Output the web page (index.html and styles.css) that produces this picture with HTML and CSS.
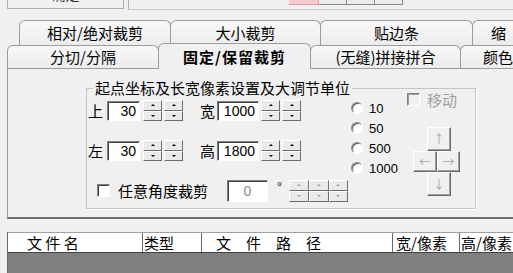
FILE: index.html
```html
<!DOCTYPE html>
<html lang="zh-CN">
<head>
    <meta charset="UTF-8">
    <title>固定/保留裁剪</title>
    <link rel="stylesheet" href="styles.css">
</head>
<body>
    <div class="topbar">
        <div class="top-btn"><span>确定</span></div>
        <div class="top-box">
            <div class="toolstrip">
                <span class="tool pink"></span>
                <span class="tool"></span>
                <span class="tool"></span>
                <span class="tool"></span>
            </div>
        </div>
    </div>

    <div class="tabs">
        <div class="tab-row back">
            <div class="tab w152">相对/绝对裁剪</div>
            <div class="tab w151">大小裁剪</div>
            <div class="tab w153">贴边条</div>
            <div class="tab last first-row">缩</div>
        </div>
        <div class="tab-row front">
            <div class="tab w152">分切/分隔</div>
            <div class="tab w153 active">固定/保留裁剪</div>
            <div class="tab w151">(无缝)拼接拼合</div>
            <div class="tab last">颜色</div>
        </div>
    </div>

    <div class="panel">
        <div class="group">
            <span class="group-title">起点坐标及长宽像素设置及大调节单位</span>

            <div class="fields">
                <div class="field-row">
                    <span class="lbl">上</span>
                    <span class="edit w33">30</span>
                    <span class="spin"><i class="up"></i><i class="down"></i></span>
                    <span class="spin"><i class="up"></i><i class="down"></i></span>
                    <span class="lbl second">宽</span>
                    <span class="edit w42">1000</span>
                    <span class="spin"><i class="up"></i><i class="down"></i></span>
                    <span class="spin"><i class="up"></i><i class="down"></i></span>
                </div>
                <div class="field-row row2">
                    <span class="lbl">左</span>
                    <span class="edit w33">30</span>
                    <span class="spin"><i class="up"></i><i class="down"></i></span>
                    <span class="spin"><i class="up"></i><i class="down"></i></span>
                    <span class="lbl second">高</span>
                    <span class="edit w42">1800</span>
                    <span class="spin"><i class="up"></i><i class="down"></i></span>
                    <span class="spin"><i class="up"></i><i class="down"></i></span>
                </div>
                <div class="angle-row">
                    <span class="check"></span>
                    <span class="angle-text">任意角度裁剪</span>
                    <span class="edit disabled">0</span>
                    <span class="degree">°</span>
                    <span class="spin3">
                        <i class="up"></i><i class="up"></i><i class="up"></i>
                        <i class="down"></i><i class="down"></i><i class="down"></i>
                    </span>
                </div>
            </div>

            <div class="radios">
                <div class="radio-row"><span class="radio"></span>10</div>
                <div class="radio-row"><span class="radio"></span>50</div>
                <div class="radio-row"><span class="radio"></span>500</div>
                <div class="radio-row"><span class="radio"></span>1000</div>
            </div>

            <div class="move">
                <div class="move-row"><span class="check off"></span><span class="move-text">移动</span></div>
                <div class="pad">
                    <span class="pad-btn p-up">↑</span>
                    <span class="pad-btn p-left">←</span>
                    <span class="pad-btn p-right">→</span>
                    <span class="pad-btn p-down">↓</span>
                </div>
            </div>
        </div>
    </div>

    <div class="list">
        <div class="list-head">
            <span class="col c-name">文 件 名</span>
            <span class="col c-type">类型</span>
            <span class="col c-path">文　件　路　径</span>
            <span class="col c-w">宽/像素</span>
            <span class="col c-h">高/像素</span>
        </div>
        <div class="list-body"></div>
    </div>
</body>
</html>
```

FILE: styles.css
```css
body {
    margin: 0;
    width: 513px;
    height: 273px;
    overflow: hidden;
    background: #f0f0f0;
    font-family: "Noto Sans CJK SC", sans-serif;
    font-size: 15px;
    color: #000;
}

/* strip of the window above the tabs, mostly cut off */
.topbar {
    display: flex;
    height: 10px;
}

.top-btn {
    margin-left: 7px;
    width: 115px;
    height: 8px;
    border: 1px solid #adadad;
    border-top: none;
    overflow: hidden;
    text-align: center;
}

.top-btn span {
    display: block;
    margin-top: -15px;
    line-height: 18px;
    font-size: 14px;
    color: #333;
}

.top-box {
    margin-left: 4px;
    flex: 1;
    height: 9px;
    border-left: 1px solid #adadad;
    border-bottom: 1px solid #c8c8c8;
}

.toolstrip {
    display: flex;
    margin-left: 160px;
    height: 5px;
}

.tool {
    width: 27px;
    border: 1px solid #8a8a8a;
    border-top: none;
    border-left: none;
    background: #ececec;
}

.tool.pink {
    width: 29px;
    background: #f4c9cf;
    border-color: #d7a0a8;
}

/* tabs */
.tabs {
    margin-top: 10px;
}

.tab-row {
    display: flex;
}

.tab-row.back {
    padding-left: 19px;
    height: 25px;
}

.tab-row.front {
    padding-left: 7px;
    height: 23px;
}

.tab {
    flex-shrink: 0;
    box-sizing: border-box;
    margin-right: -1px;
    border: 1px solid #9c9c9c;
    border-bottom: none;
    border-radius: 6px 6px 0 0;
    background: linear-gradient(#f8f8f8, #ececec);
    text-align: center;
    white-space: nowrap;
    overflow: hidden;
}

.tab.last {
    flex: 1;
    margin-right: 0;
    border-right: none;
    border-top-right-radius: 0;
    padding-left: 22px;
    text-align: left;
}

.tab.last.first-row {
    padding-left: 18px;
}

.back .tab {
    height: 25px;
    line-height: 23px;
}

.front .tab {
    height: 23px;
    line-height: 22px;
}

.front .tab.active {
    position: relative;
    z-index: 1;
    height: 26px;
    margin-top: -2px;
    line-height: 25px;
    background: #f0f0f0;
    font-weight: bold;
    letter-spacing: 1px;
}

.w151 { width: 151px; }
.w152 { width: 152px; }
.w153 { width: 153px; }

/* tab page */
.panel {
    box-sizing: border-box;
    height: 151px;
    margin-left: 7px;
    padding-top: 19px;
    border-top: 1px solid #9c9c9c;
    border-left: 1px solid #9c9c9c;
    border-bottom: 2px solid #707070;
}

.group {
    position: relative;
    box-sizing: border-box;
    display: flex;
    align-items: flex-start;
    width: 390px;
    height: 121px;
    margin-left: 78px;
    border: 1px solid #c4c4c4;
    box-shadow: 1px 1px 0 #fff;
}

.group-title {
    position: absolute;
    top: -11px;
    left: 6px;
    padding: 0 2px;
    background: #f0f0f0;
    line-height: 20px;
}

.fields {
    width: 261px;
    margin-left: 1px;
    padding-top: 11px;
}

.field-row {
    display: flex;
    align-items: center;
    height: 21px;
}

.field-row.row2 {
    margin-top: 19px;
}

.lbl {
    width: 19px;
    line-height: 21px;
}

.lbl.second {
    width: 17px;
    margin-left: 15px;
}

.edit {
    box-sizing: border-box;
    height: 20px;
    padding-right: 3px;
    border: 1px solid;
    border-color: #808080 #fff #fff #808080;
    box-shadow: inset 1px 1px 0 #404040;
    background: #fff;
    font-family: "Liberation Sans", sans-serif;
    font-size: 14px;
    line-height: 18px;
    text-align: right;
}

.w33 { width: 33px; margin-right: 3px; }
.w42 { width: 42px; margin-right: 2px; }

.spin {
    display: flex;
    flex-direction: column;
    box-sizing: border-box;
    width: 19px;
    height: 21px;
    margin-right: 2px;
}

.spin i, .spin3 i {
    position: relative;
    flex: 1;
    box-sizing: border-box;
    border: 1px solid;
    border-color: #fff #6b6b6b #6b6b6b #fff;
    background: #eaeaea;
}

.spin i::after, .spin3 i::after {
    content: "";
    position: absolute;
    left: 50%;
    top: 50%;
    margin: -1px 0 0 -2px;
    border: 2px solid transparent;
}

.spin i.up::after, .spin3 i.up::after {
    margin-top: -3px;
    border-bottom-color: #000;
}

.spin i.down::after, .spin3 i.down::after {
    margin-top: -1px;
    border-top-color: #000;
}

.angle-row {
    display: flex;
    align-items: center;
    height: 23px;
    margin-top: 18px;
}

.check {
    box-sizing: border-box;
    width: 13px;
    height: 13px;
    border: 1px solid;
    border-color: #808080 #fff #fff #808080;
    box-shadow: inset 1px 1px 0 #404040;
    background: #fff;
}

.angle-row .check {
    margin-left: 9px;
}

.angle-text {
    margin-left: 8px;
}

.edit.disabled {
    width: 41px;
    height: 22px;
    margin-left: 19px;
    padding: 0;
    line-height: 20px;
    text-align: center;
    color: #8c8c8c;
}

.degree {
    margin-left: 9px;
    margin-top: -8px;
    font-family: "Liberation Sans", sans-serif;
    font-size: 13px;
}

.spin3 {
    display: grid;
    grid-template-columns: repeat(3, 1fr);
    grid-template-rows: repeat(2, 1fr);
    width: 59px;
    height: 22px;
    margin-left: 7px;
}

.spin3 i.up::after {
    border-bottom-color: #a0a0a0;
}

.spin3 i.down::after {
    border-top-color: #a0a0a0;
}

/* step size radios */
.radios {
    width: 56px;
    margin-left: 2px;
    padding-top: 9px;
    font-family: "Liberation Sans", sans-serif;
    font-size: 13px;
}

.radio-row {
    display: flex;
    align-items: center;
    height: 20px;
}

.radio {
    box-sizing: border-box;
    width: 12px;
    height: 12px;
    margin-right: 6px;
    border: 1px solid;
    border-color: #8a8a8a #fff #fff #8a8a8a;
    border-radius: 50%;
    box-shadow: inset 1px 1px 0 #606060;
    background: #fff;
}

/* move pad */
.move {
    padding-top: 4px;
}

.move-row {
    display: flex;
    align-items: center;
    height: 13px;
}

.check.off {
    background: #f0f0f0;
    box-shadow: inset 1px 1px 0 #a0a0a0;
}

.move-text {
    margin-left: 7px;
    color: #a0a0a0;
}

.pad {
    display: grid;
    grid-template-columns: 14px 10px 14px 9px;
    grid-template-rows: 24px 21px 24px;
    margin-top: 21px;
    margin-left: 6px;
}

.pad-btn {
    box-sizing: border-box;
    border: 1px solid;
    border-color: #fff #696969 #696969 #fff;
    box-shadow: inset -1px -1px 0 #a0a0a0;
    background: #f0f0f0;
    color: #a6a6a6;
    font-size: 12px;
    text-align: center;
}

.p-up { grid-column: 2 / 4; grid-row: 1; line-height: 22px; }
.p-left { grid-column: 1 / 3; grid-row: 2; line-height: 19px; }
.p-right { grid-column: 3 / 5; grid-row: 2; line-height: 19px; }
.p-down { grid-column: 2 / 4; grid-row: 3; line-height: 22px; }

/* file list */
.list {
    margin-top: 13px;
    margin-left: 7px;
    border-left: 1px solid #696969;
}

.list-head {
    display: flex;
    height: 21px;
    box-sizing: border-box;
    border-top: 1px solid #a0a0a0;
    border-bottom: 1px solid #404040;
    background: #fff;
}

.col {
    flex-shrink: 0;
    box-sizing: border-box;
    border-right: 1px solid #696969;
    line-height: 19px;
    white-space: nowrap;
}

.c-name { width: 135px; padding-left: 19px; }
.c-type { width: 59px; padding-left: 1px; }
.c-path { width: 191px; padding-left: 14px; }
.c-w { width: 67px; padding-left: 3px; }
.c-h { flex: 1; padding-left: 1px; border-right: none; }

.list-body {
    height: 20px;
    background: #808080;
}
```
